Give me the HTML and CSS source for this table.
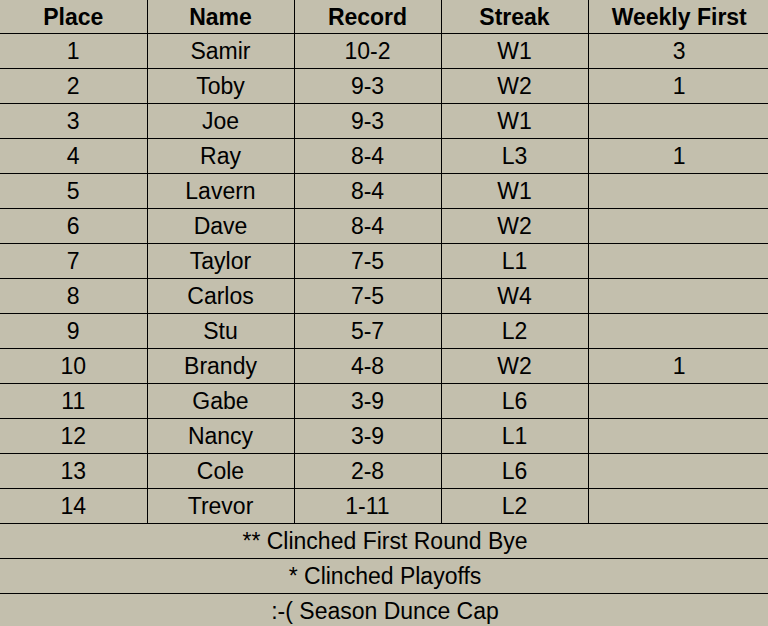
FILE: index.html
```html
<!DOCTYPE html>
<html>
<head>
<meta charset="utf-8">
<link rel="stylesheet" href="styles.css">
</head>
<body>
<div class="wrap">
<table class="standings">
<colgroup><col class="c1"><col class="c2"><col class="c3"><col class="c4"><col class="c5"></colgroup>
<thead>
<tr class="head"><th>Place</th><th>Name</th><th>Record</th><th>Streak</th><th>Weekly First</th></tr>
</thead>
<tbody>
<tr><td>1</td><td>Samir</td><td>10-2</td><td>W1</td><td>3</td></tr>
<tr><td>2</td><td>Toby</td><td>9-3</td><td>W2</td><td>1</td></tr>
<tr><td>3</td><td>Joe</td><td>9-3</td><td>W1</td><td></td></tr>
<tr><td>4</td><td>Ray</td><td>8-4</td><td>L3</td><td>1</td></tr>
<tr><td>5</td><td>Lavern</td><td>8-4</td><td>W1</td><td></td></tr>
<tr><td>6</td><td>Dave</td><td>8-4</td><td>W2</td><td></td></tr>
<tr><td>7</td><td>Taylor</td><td>7-5</td><td>L1</td><td></td></tr>
<tr><td>8</td><td>Carlos</td><td>7-5</td><td>W4</td><td></td></tr>
<tr><td>9</td><td>Stu</td><td>5-7</td><td>L2</td><td></td></tr>
<tr><td>10</td><td>Brandy</td><td>4-8</td><td>W2</td><td>1</td></tr>
<tr><td>11</td><td>Gabe</td><td>3-9</td><td>L6</td><td></td></tr>
<tr><td>12</td><td>Nancy</td><td>3-9</td><td>L1</td><td></td></tr>
<tr><td>13</td><td>Cole</td><td>2-8</td><td>L6</td><td></td></tr>
<tr><td>14</td><td>Trevor</td><td>1-11</td><td>L2</td><td></td></tr>
<tr class="note"><td colspan="5">** Clinched First Round Bye</td></tr>
<tr class="note"><td colspan="5">* Clinched Playoffs</td></tr>
<tr class="note"><td colspan="5">:-( Season Dunce Cap</td></tr>
</tbody>
</table>
</div>
</body>
</html>
```
FILE: styles.css
```css
html, body {
  margin: 0;
  padding: 0;
  background: #c3bfad;
}
.wrap {
  width: 768px;
  height: 626px;
  overflow: hidden;
}
.standings {
  border-collapse: collapse;
  table-layout: fixed;
  width: 770px;
  font-family: "Liberation Sans", Arial, sans-serif;
  font-size: 23px;
  color: #000;
}
.c1 { width: 147px; }
.c2 { width: 147px; }
.c3 { width: 147px; }
.c4 { width: 147px; }
.c5 { width: 182px; }
.standings th,
.standings td {
  border: 1.5px solid #000;
  text-align: center;
  vertical-align: middle;
  padding: 0;
  height: 34px;
  line-height: 26px;
}
.standings th {
  font-weight: bold;
  border-top: none;
}
.standings tr > :first-child { border-left: none; }
.standings tr > :last-child { border-right: none; }
.standings .head th { height: 33px; }
```
